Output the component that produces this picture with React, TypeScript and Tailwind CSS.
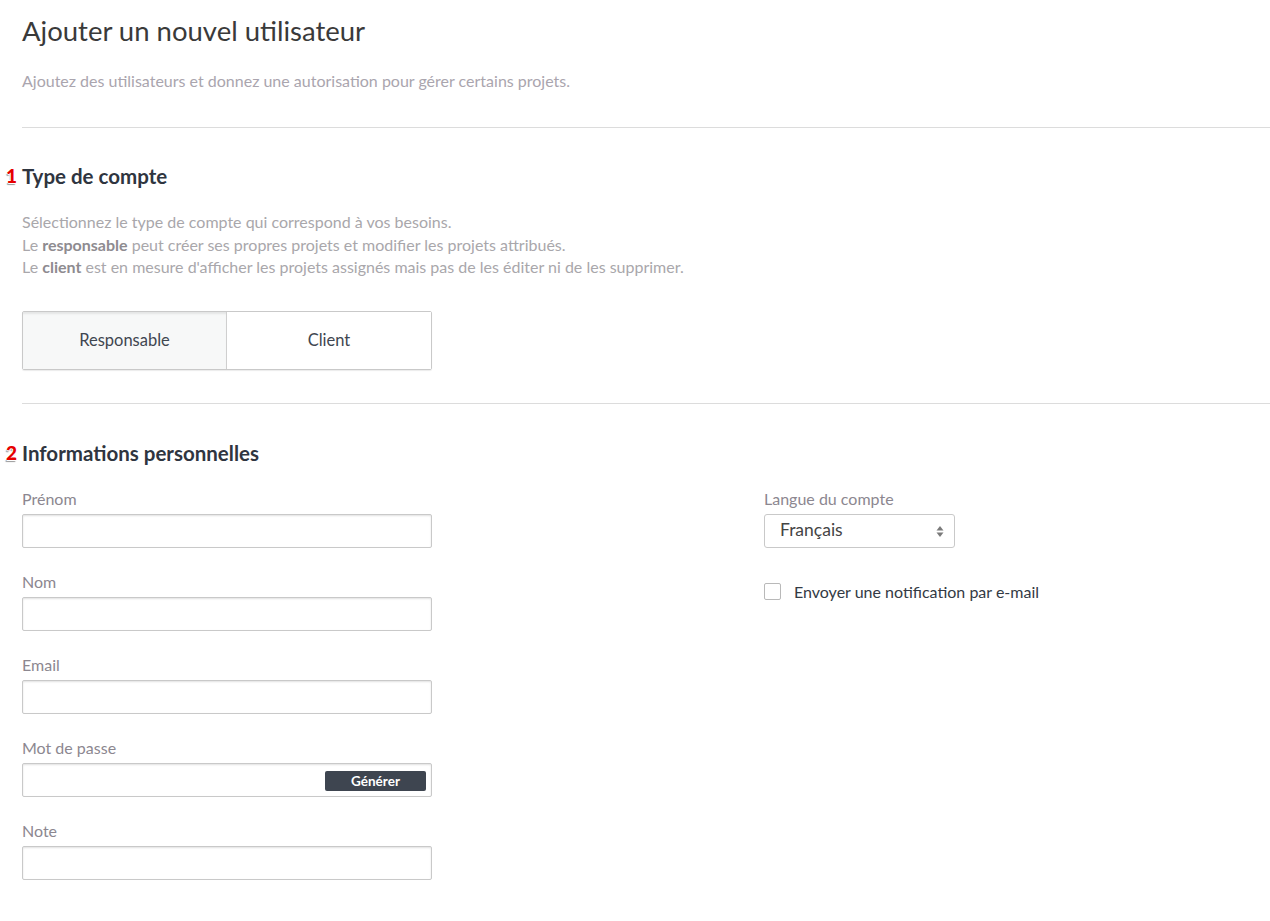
import React from "react";

const Badge = ({ n }: { n: string }) => (
  <span className="absolute left-[-16px] top-[1px] text-[19px] font-black leading-[22px] text-[#e60000] [text-shadow:1px_0_0_#fff,-1px_0_0_#fff,0_1px_0_#fff,0_-1px_0_#fff,-1px_2px_1px_#9a9a9a]">
    {n}
  </span>
);

const Field = ({ label, children }: { label: string; children?: React.ReactNode }) => (
  <div className="mb-[24px]">
    <div className="mb-[5px] text-[16px] leading-[20px] text-[#8c8790]">{label}</div>
    <div className="relative h-[34px] w-[410px] rounded-[2px] border border-[#c9c9c9] bg-white shadow-[inset_0_1px_2px_rgba(0,0,0,0.12)]">
      {children}
    </div>
  </div>
);

export default function App() {
  return (
    <div className="min-h-[921px] bg-white pl-[22px] font-['Lato',sans-serif] text-[#333]">
      <header className="pt-[15px]">
        <h1 className="text-[27.5px] font-normal leading-[32px] text-[#3a3a3a]">
          Ajouter un nouvel utilisateur
        </h1>
        <p className="mt-[23px] text-[16px] leading-[22px] text-[#aaa5ae]">
          Ajoutez des utilisateurs et donnez une autorisation pour gérer certains projets.
        </p>
      </header>

      <hr className="mt-[35px] border-t border-[#dcdcdc]" />

      <section className="pt-[36px]">
        <h2 className="relative text-[20.5px] font-bold leading-[24px] text-[#2f3540]">
          <Badge n="1" />
          Type de compte
        </h2>
        <div className="mt-[23px] text-[16px] leading-[22.5px] text-[#a9a7ab]">
          <p>Sélectionnez le type de compte qui correspond à vos besoins.</p>
          <p>
            Le <span className="font-bold text-[#8e8b90]">responsable</span> peut créer ses propres projets et modifier les projets attribués.
          </p>
          <p>
            Le <span className="font-bold text-[#8e8b90]">client</span> est en mesure d'afficher les projets assignés mais pas de les éditer ni de les supprimer.
          </p>
        </div>
        <div className="mt-[32px] flex h-[59px] w-[410px] rounded-[2px] border border-[#c9c9c9] shadow-[0_1px_1px_rgba(0,0,0,0.08)]">
          <button className="flex w-[204px] items-center justify-center border-r border-[#cfcfcf] bg-[#f7f8f8] text-[16.5px] text-[#3f4650] shadow-[inset_0_3px_2px_-1px_rgba(0,0,0,0.08)]">
            Responsable
          </button>
          <button className="flex flex-1 items-center justify-center bg-white text-[16.5px] text-[#3f4650]">
            Client
          </button>
        </div>
      </section>

      <hr className="mt-[33px] border-t border-[#dcdcdc]" />

      <section className="pt-[37px]">
        <h2 className="relative text-[20.5px] font-bold leading-[24px] text-[#2f3540]">
          <Badge n="2" />
          Informations personnelles
        </h2>
        <div className="mt-[24px] flex">
          <div className="w-[742px]">
            <Field label="Prénom" />
            <Field label="Nom" />
            <Field label="Email" />
            <Field label="Mot de passe">
              <button className="absolute right-[5px] top-[7px] h-[20px] w-[101px] rounded-[2px] bg-[#3e4550] text-[13.5px] font-bold leading-[20px] text-white">
                Générer
              </button>
            </Field>
            <Field label="Note" />
          </div>
          <div>
            <div className="mb-[5px] text-[16px] leading-[20px] text-[#8c8790]">Langue du compte</div>
            <div className="relative flex h-[34px] w-[191px] items-center rounded-[3px] border border-[#c9c9c9] bg-white pl-[15px] text-[17.5px] text-[#444]">
              Français
              <svg className="absolute right-[10px] top-[10px]" width="8" height="13" viewBox="0 0 8 13">
                <path d="M4 1 L7.5 5.5 H0.5 Z" fill="#7a7a7a" />
                <path d="M4 12 L7.5 7.5 H0.5 Z" fill="#7a7a7a" />
              </svg>
            </div>
            <label className="mt-[34px] flex items-center">
              <span className="h-[17px] w-[17px] rounded-[2px] border border-[#b9b9b9] bg-white" />
              <span className="ml-[13px] text-[16px] leading-[20px] text-[#333a44]">
                Envoyer une notification par e-mail
              </span>
            </label>
          </div>
        </div>
      </section>
    </div>
  );
}
